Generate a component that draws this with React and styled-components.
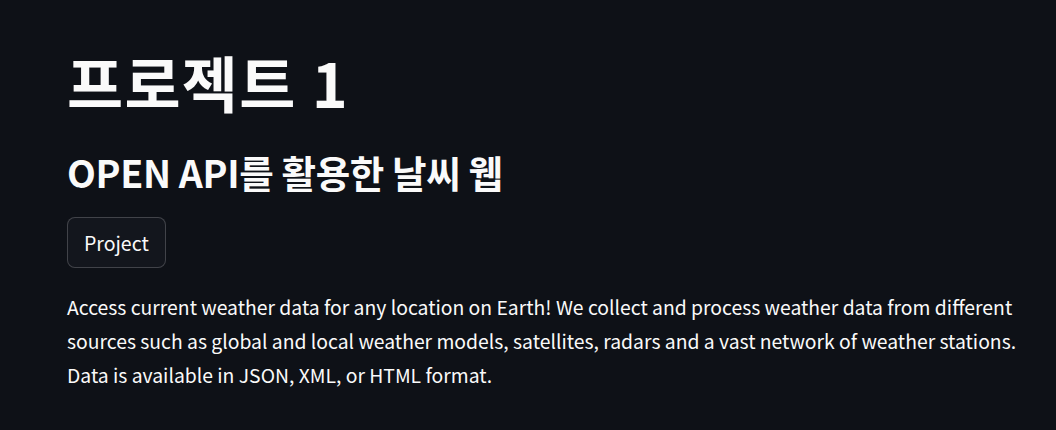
import React from 'react';
import styled, { createGlobalStyle } from 'styled-components';

const GlobalStyle = createGlobalStyle`
  html, body {
    margin: 0;
    padding: 0;
    background-color: #0e1117;
  }
  body {
    font-family: 'Noto Sans CJK KR', 'Noto Sans', sans-serif;
    color: #fafafa;
  }
`;

const Page = styled.main`
  min-height: 430px;
  padding: 45px 0 0 67px;
  display: flex;
  flex-direction: column;
  align-items: flex-start;
  box-sizing: border-box;
`;

const Title = styled.h1`
  margin: 0;
  font-size: 61px;
  font-weight: 700;
  line-height: 1.2;
  letter-spacing: 1.3px;
`;

const Subtitle = styled.h2`
  margin: 31px 0 0;
  font-size: 37.5px;
  font-weight: 700;
  line-height: 1.2;
  letter-spacing: -0.35px;
`;

const TagButton = styled.button`
  margin-top: 23px;
  height: 51px;
  padding: 0 16px;
  background-color: #13161d;
  color: #fafafa;
  border: 1px solid rgba(250, 250, 250, 0.2);
  border-radius: 8px;
  font-family: inherit;
  font-size: 19.5px;
  font-weight: 400;
  cursor: pointer;
`;

const Description = styled.p`
  margin: 22px 0 0;
  font-size: 19.35px;
  line-height: 34px;
  max-width: 975px;
`;

export default function App() {
  return (
    <>
      <GlobalStyle />
      <Page>
        <Title>프로젝트 1</Title>
        <Subtitle>OPEN API를 활용한 날씨 웹</Subtitle>
        <TagButton>Project</TagButton>
        <Description>
          Access current weather data for any location on Earth! We collect and process weather data from different
          sources such as global and local weather models, satellites, radars and a vast network of weather stations.
          Data is available in JSON, XML, or HTML format.
        </Description>
      </Page>
    </>
  );
}
